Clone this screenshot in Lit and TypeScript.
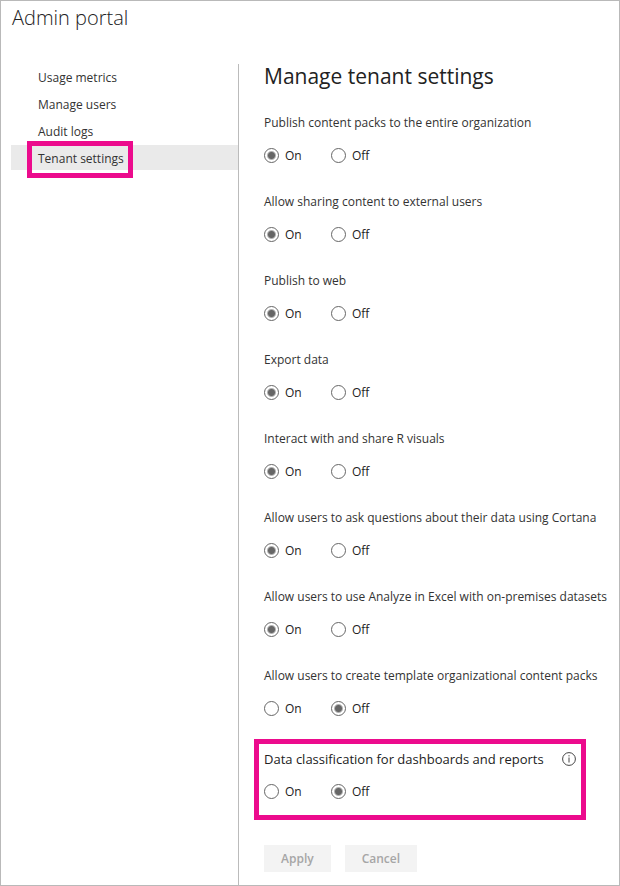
import { LitElement, html, css, nothing } from "lit";
import { customElement, property } from "lit/decorators.js";

interface Setting {
  id: string;
  label: string;
  on: boolean;
}

const NAV = ["Usage metrics", "Manage users", "Audit logs", "Tenant settings"];

const SETTINGS: Setting[] = [
  { id: "packs", label: "Publish content packs to the entire organization", on: true },
  { id: "external", label: "Allow sharing content to external users", on: true },
  { id: "web", label: "Publish to web", on: true },
  { id: "export", label: "Export data", on: true },
  { id: "r-visuals", label: "Interact with and share R visuals", on: true },
  { id: "cortana", label: "Allow users to ask questions about their data using Cortana", on: true },
  { id: "excel", label: "Allow users to use Analyze in Excel with on-premises datasets", on: true },
  { id: "templates", label: "Allow users to create template organizational content packs", on: false },
];

@customElement("tenant-setting")
export class TenantSetting extends LitElement {
  @property() name = "";
  @property() label = "";
  @property({ type: Boolean }) on = false;
  @property({ type: Boolean, reflect: true }) marked = false;

  static styles = css`
    :host {
      display: block;
      padding-bottom: 32px;
    }
    :host([marked]) {
      padding-bottom: 0;
    }
    .group {
      margin: 0;
      padding: 0;
      border: 0;
      min-width: 0;
    }
    .legend {
      display: flex;
      align-items: center;
      gap: 18px;
      padding: 0;
      line-height: 18px;
      white-space: nowrap;
      color: #333;
    }
    :host([marked]) .legend {
      font-size: 13px;
      color: #222;
    }
    .options {
      display: flex;
      padding-top: 18px;
    }
    .option {
      display: flex;
      align-items: center;
      gap: 6px;
      width: 67px;
      height: 11px;
      line-height: 11px;
      color: #222;
    }
    .radio {
      appearance: none;
      box-sizing: border-box;
      flex: none;
      width: 15px;
      height: 15px;
      margin: 0;
      border: 1px solid #666;
      border-radius: 50%;
      background: #fff;
    }
    .radio:checked {
      background: radial-gradient(circle, #666 0 3px, #fff 5px);
    }
    .info {
      display: block;
      width: 14px;
      height: 14px;
    }
  `;

  render() {
    return html`
      <fieldset class="group">
        <legend class="legend">
          ${this.label}
          ${this.marked
            ? html`<svg class="info" viewBox="0 0 14 14" role="img" aria-label="More information">
                <circle cx="7" cy="7" r="6.4" fill="none" stroke="#444" />
                <path d="M7 5.5v5M7 3.2v1.2" stroke="#444" stroke-width="1" />
              </svg>`
            : nothing}
        </legend>
        <div class="options">
          <label class="option">
            <input class="radio" type="radio" name=${this.name} value="on" ?checked=${this.on} />On
          </label>
          <label class="option">
            <input class="radio" type="radio" name=${this.name} value="off" ?checked=${!this.on} />Off
          </label>
        </div>
      </fieldset>
    `;
  }
}

@customElement("app-root")
export class AppRoot extends LitElement {
  static styles = css`
    :host {
      display: flex;
      flex-direction: column;
      box-sizing: border-box;
      min-height: 100vh;
      border: 1px solid #b9b9b9;
      background: #fff;
      color: #333;
      font-family: "Open Sans", "Noto Sans", sans-serif;
      font-size: 12px;
    }
    .title {
      margin: 0;
      padding: 2px 11px 31px;
      font-size: 20px;
      font-weight: 300;
      line-height: 30px;
      color: #222;
    }
    .body {
      flex: 1;
      display: flex;
      padding-left: 10px;
    }
    .nav {
      flex: none;
      display: flex;
      flex-direction: column;
      gap: 2px;
      box-sizing: border-box;
      width: 228px;
      border-right: 1px solid #bbb;
    }
    .link {
      padding: 2px 0 0 27px;
      line-height: 23px;
      color: #333;
      text-decoration: none;
    }
    .link.current {
      background: #eaeaea;
    }
    .tag {
      position: relative;
      display: inline-block;
    }
    .current .tag::after {
      content: "";
      position: absolute;
      inset: -6px -9px -8px -11px;
      border: 5px solid #ec0b8d;
    }
    .main {
      flex: 1;
      min-width: 0;
      padding: 0 14px 12px 25px;
    }
    .heading {
      margin: 0;
      padding-bottom: 26px;
      font-size: 21px;
      font-weight: 400;
      line-height: 24px;
      color: #222;
    }
    .callout {
      width: fit-content;
      margin: -7px 0 0 -10px;
      padding: 6px 5px 18px;
      border: 5px solid #ec0b8d;
    }
    .actions {
      display: flex;
      gap: 14px;
      padding-top: 25px;
    }
    .button {
      height: 27px;
      padding: 0 17px;
      border: 0;
      background: #f3f3f3;
      color: #a6a6a6;
      font-family: inherit;
      font-size: 12px;
      font-weight: 600;
    }
  `;

  render() {
    return html`
      <h1 class="title">Admin portal</h1>
      <div class="body">
        <nav class="nav" aria-label="Admin portal">
          ${NAV.map((item, i) => {
            const current = i === NAV.length - 1;
            return html`<a
              class="link ${current ? "current" : ""}"
              href="#"
              aria-current=${current ? "page" : nothing}
              ><span class="tag">${item}</span></a
            >`;
          })}
        </nav>
        <main class="main">
          <h2 class="heading">Manage tenant settings</h2>
          ${SETTINGS.map(
            (s) => html`<tenant-setting .name=${s.id} .label=${s.label} .on=${s.on}></tenant-setting>`
          )}
          <div class="callout">
            <tenant-setting
              name="classification"
              label="Data classification for dashboards and reports"
              marked
            ></tenant-setting>
          </div>
          <div class="actions">
            <button class="button" type="button" disabled>Apply</button>
            <button class="button" type="button" disabled>Cancel</button>
          </div>
        </main>
      </div>
    `;
  }
}
